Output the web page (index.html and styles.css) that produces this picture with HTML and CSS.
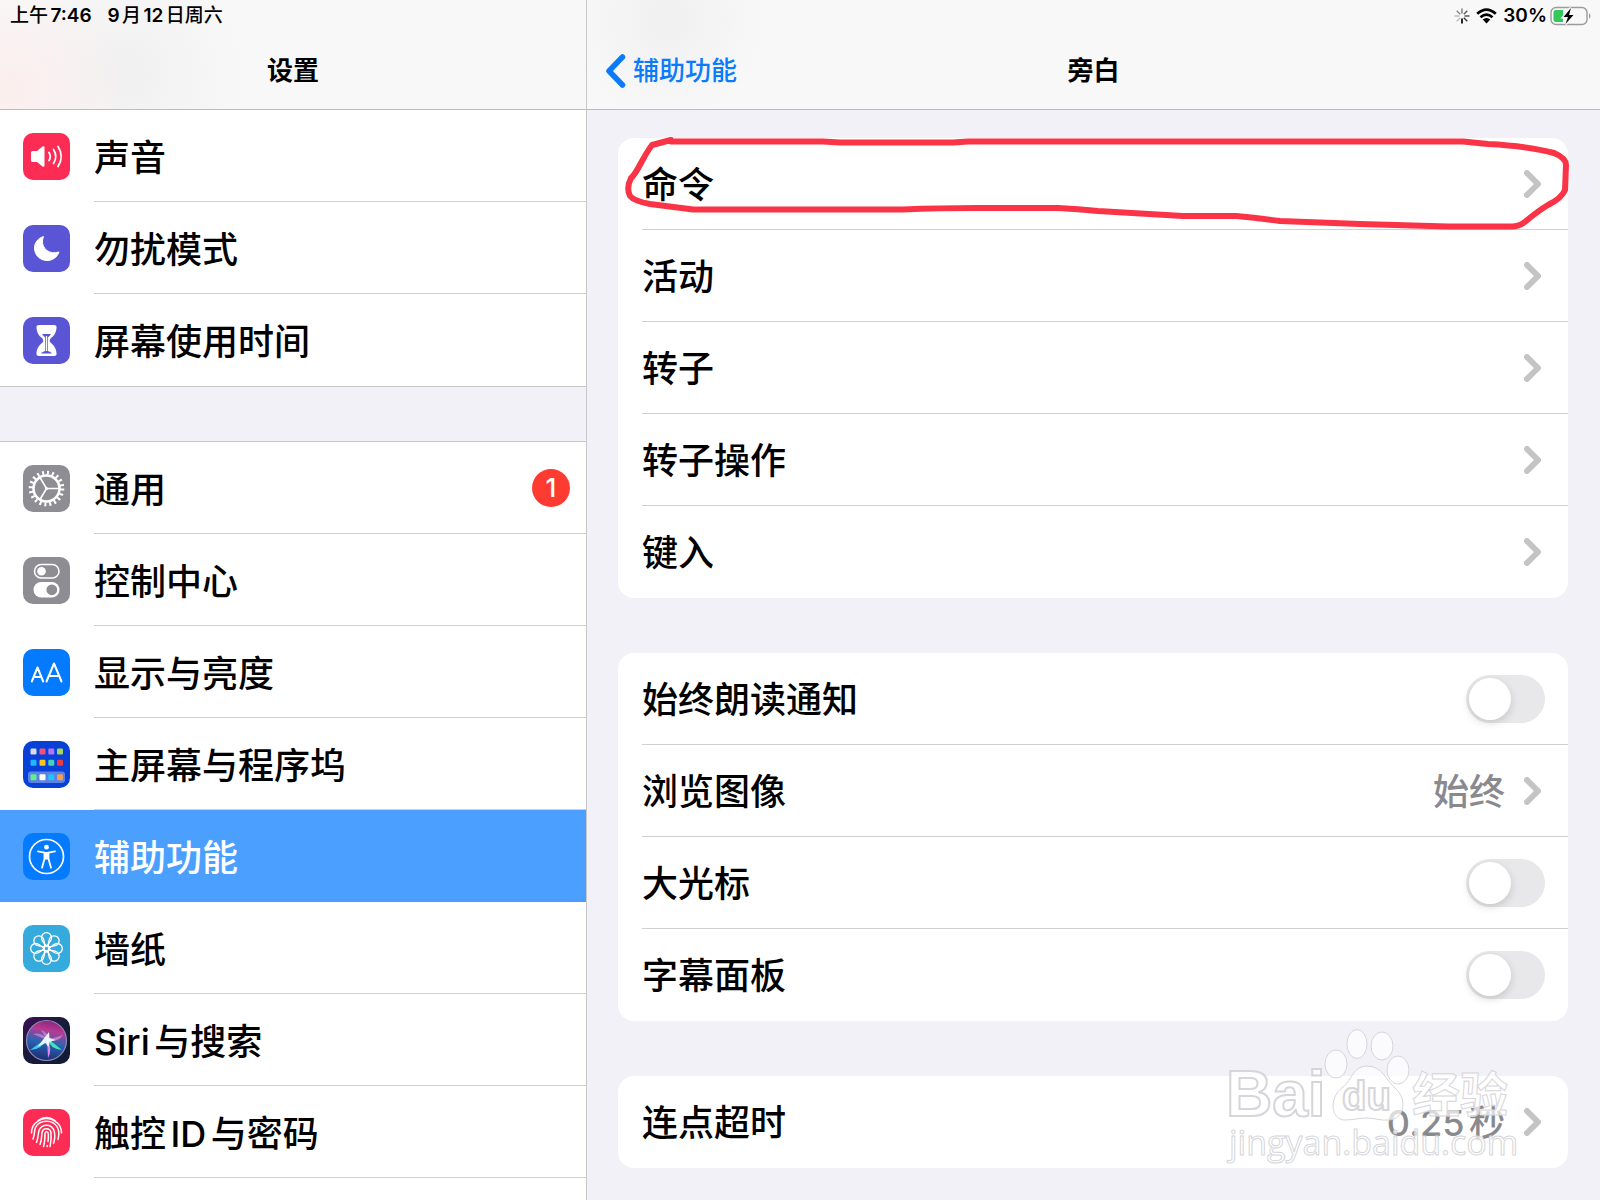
FILE: index.html
```html
<!DOCTYPE html>
<html lang="zh-CN">
<head>
    <meta charset="UTF-8">
    <meta name="viewport" content="width=device-width, initial-scale=1.0">
    <title>设置</title>
    <link rel="stylesheet" href="styles.css">
</head>
<body>
    <aside class="sidebar">
        <header class="bar bar-left">
            <div class="status">
                <span>上午<b>7:46</b></span>
                <span><b>9</b>月<b>12</b>日周六</span>
            </div>
            <div class="nav">
                <h2 class="title">设置</h2>
            </div>
        </header>

        <nav class="menu">
            <a class="item" href="#">
                <svg class="icon" viewBox="0 0 47 47">
                    <rect width="47" height="47" rx="10" fill="#fc2c55"/>
                    <path d="M8 19.500q0-1.500 1.500-1.500h4.500l5.500-4.500q2-1 2 1v18q0 2-2 1l-5.500-4.500h-4.500q-1.500 0-1.500-1.500z" fill="#fff"/>
                    <path d="M26 19.500q2.500 4 0 8M30.500 16.500q4.500 7 0 14M35 13.500q6.500 10 0 20" fill="none" stroke="#fff" stroke-width="1.800" stroke-linecap="round"/>
                </svg>
                <span class="label">声音</span>
            </a>
            <a class="item" href="#">
                <svg class="icon" viewBox="0 0 47 47">
                    <rect width="47" height="47" rx="10" fill="#5955d5"/>
                    <path d="M20.500 11.500c-6 2-9 6.500-9 11.500 0 7 5.500 12.500 12.500 12.500 5.500 0 10-3 12-8.500-9 3-17.500-3-16.500-12z" fill="#fff" stroke="#fff" stroke-width="1" stroke-linejoin="round"/>
                </svg>
                <span class="label">勿扰模式</span>
            </a>
            <a class="item" href="#">
                <svg class="icon" viewBox="0 0 47 47">
                    <rect width="47" height="47" rx="10" fill="#5955d5"/>
                    <path d="M16 8h15q3 0 2.500 3c-.5 6-3 8-6 10.500q-1.500 2 0 4c3 2.500 5.500 5 6 10.500q.5 3-2.500 3h-15q-3 0-2.500-3c.5-5.500 3-8 6-10.500q1.500-2 0-4c-3-2.500-5.500-4.500-6-10.500q-.5-3 2.500-3z" fill="#fff"/>
                    <path d="M19 17h9q-1.500 2-3.200 3.500v13.500q3.200.5 4.200 2.500h-11q1-2 4.200-2.500v-13.500q-1.700-1.500-3.200-3.500z" fill="#5955d5"/>
                    <path d="M23.500 19v15" stroke="#fff" stroke-width="1.200"/>
                </svg>
                <span class="label">屏幕使用时间</span>
            </a>
        </nav>

        <nav class="menu menu-last">
            <a class="item" href="#">
                <svg class="icon" viewBox="0 0 47 47">
                    <rect width="47" height="47" rx="10" fill="#8e8d93"/>
                    <circle cx="23.500" cy="23.500" r="15.800" fill="none" stroke="#fff" stroke-width="4" stroke-dasharray="2 2.964"/>
                    <circle cx="23.500" cy="23.500" r="13" fill="none" stroke="#fff" stroke-width="2.600"/>
                    <path d="M23.500 23.500h12M23.500 23.500l-6.500-11M23.500 23.500l-6.500 11" stroke="#fff" stroke-width="1.600"/>
                    <circle cx="23.500" cy="23.500" r="1.600" fill="#fff"/>
                </svg>
                <span class="label">通用</span>
                <span class="badge">1</span>
            </a>
            <a class="item" href="#">
                <svg class="icon" viewBox="0 0 47 47">
                    <rect width="47" height="47" rx="10" fill="#8e8d93"/>
                    <rect x="11.500" y="7.500" width="24.500" height="13.500" rx="6.700" fill="none" stroke="#fff" stroke-width="1.600"/>
                    <circle cx="18.500" cy="14.200" r="4.300" fill="#fff"/>
                    <rect x="10.500" y="25" width="26" height="15.500" rx="7.700" fill="#fff"/>
                    <circle cx="28.800" cy="32.800" r="5.400" fill="#8e8d93"/>
                </svg>
                <span class="label">控制中心</span>
            </a>
            <a class="item" href="#">
                <svg class="icon" viewBox="0 0 47 47">
                    <rect width="47" height="47" rx="10" fill="#047bfe"/>
                    <path d="M8.800 32.500l5.700-14 5.700 14M10.800 28h7.500M23.500 32.500l7.500-18 7.500 18M26 27h10" fill="none" stroke="#fff" stroke-width="2" stroke-linecap="round" stroke-linejoin="round"/>
                </svg>
                <span class="label">显示与亮度</span>
            </a>
            <a class="item" href="#">
                <svg class="icon" viewBox="0 0 47 47">
                    <rect width="47" height="47" rx="10" fill="#0940d8"/>
                    <rect x="5" y="30.500" width="37" height="11.500" rx="3" fill="#5b82e6"/>
                    <rect x="7.500" y="7.500" width="6" height="6" rx="1.200" fill="#d9dbe2"/>
                    <rect x="16.500" y="7.500" width="6" height="6" rx="1.200" fill="#f5507a"/>
                    <rect x="25.300" y="7.500" width="6" height="6" rx="1.200" fill="#b673f8"/>
                    <rect x="34" y="7.500" width="6" height="6" rx="1.200" fill="#a4d75b"/>
                    <rect x="7.500" y="18.700" width="6" height="6" rx="1.200" fill="#20b8fa"/>
                    <rect x="16.500" y="18.700" width="6" height="6" rx="1.200" fill="#fcc520"/>
                    <rect x="25.300" y="18.700" width="6" height="6" rx="1.200" fill="#45d6b0"/>
                    <rect x="34" y="18.700" width="6" height="6" rx="1.200" fill="#ee3b3c"/>
                    <rect x="7.500" y="33.200" width="6" height="6" rx="1.200" fill="#5ff088"/>
                    <rect x="16.500" y="33.200" width="6" height="6" rx="1.200" fill="#fff"/>
                    <rect x="25.300" y="33.200" width="6" height="6" rx="1.200" fill="#20c5fa"/>
                    <rect x="34" y="33.200" width="6" height="6" rx="1.200" fill="#f5a04e"/>
                </svg>
                <span class="label">主屏幕与程序坞</span>
            </a>
            <a class="item active" href="#">
                <svg class="icon" viewBox="0 0 47 47">
                    <rect width="47" height="47" rx="10" fill="#047bfe"/>
                    <circle cx="23.500" cy="23.500" r="17" fill="none" stroke="#fff" stroke-width="1.700"/>
                    <circle cx="23.500" cy="14.200" r="2.400" fill="#fff"/>
                    <path d="M15 18.300l6.500 1.400v6l-2.500 9M32 18.300l-6.500 1.400v6l2.500 9" fill="none" stroke="#fff" stroke-width="1.800" stroke-linecap="round" stroke-linejoin="round"/>
                    <path d="M21 19h5v7.500h-5z" fill="#fff"/>
                </svg>
                <span class="label">辅助功能</span>
            </a>
            <a class="item" href="#">
                <svg class="icon" viewBox="0 0 47 47">
                    <rect width="47" height="47" rx="10" fill="#35aadc"/>
                    <g fill="none" stroke="#fff" stroke-width="1.300">
                        <path id="petal" d="M23.500 21c-2-2.500-5-5-5-8.300a5 5 0 0 1 10 0c0 3.300-3 5.800-5 8.300z"/>
                        <use href="#petal" transform="rotate(45 23.500 23.500)"/>
                        <use href="#petal" transform="rotate(90 23.500 23.500)"/>
                        <use href="#petal" transform="rotate(135 23.500 23.500)"/>
                        <use href="#petal" transform="rotate(180 23.500 23.500)"/>
                        <use href="#petal" transform="rotate(225 23.500 23.500)"/>
                        <use href="#petal" transform="rotate(270 23.500 23.500)"/>
                        <use href="#petal" transform="rotate(315 23.500 23.500)"/>
                        <circle cx="23.500" cy="23.500" r="2.600"/>
                    </g>
                </svg>
                <span class="label">墙纸</span>
            </a>
            <a class="item" href="#">
                <svg class="icon" viewBox="0 0 47 47">
                    <defs>
                        <linearGradient id="siri-bg" x1="0" y1="0" x2="1" y2="1">
                            <stop offset="0" stop-color="#3c0f55"/>
                            <stop offset=".5" stop-color="#181b3c"/>
                            <stop offset="1" stop-color="#101c33"/>
                        </linearGradient>
                        <linearGradient id="siri-orb" x1=".6" y1="0" x2=".4" y2="1">
                            <stop offset="0" stop-color="#8b2380"/>
                            <stop offset=".25" stop-color="#b83a90"/>
                            <stop offset=".55" stop-color="#2a64b4"/>
                            <stop offset="1" stop-color="#1c2b72"/>
                        </linearGradient>
                    </defs>
                    <rect width="47" height="47" rx="10" fill="url(#siri-bg)"/>
                    <circle cx="23.500" cy="23.500" r="20" fill="url(#siri-orb)" stroke="#8c8bb0" stroke-width="1.200"/>
                    <path d="M24 23L10 17q10-2 14 6zM24 23l-6-10q8 2 6 10z" fill="#c9a0e4" opacity=".6"/>
                    <path d="M24 23l16-5q-5 8-16 5z" fill="#e58cd0" opacity=".7"/>
                    <path d="M24 21l-17 12q12 0 17-12z" fill="#37c8ee"/>
                    <path d="M24 21l15 12q-12-1-15-12z" fill="#43e5bd"/>
                    <path d="M24 21l1 20q5-8-1-20z" fill="#da87e8"/>
                    <path d="M26 15l.5 6 6 2-6 2-1 5-3-4-8 4 6-8z" fill="#fff" opacity=".9"/>
                </svg>
                <span class="label">Siri与搜索</span>
            </a>
            <a class="item" href="#">
                <svg class="icon" viewBox="0 0 47 47">
                    <rect width="47" height="47" rx="10" fill="#fc2c55"/>
                    <g fill="none" stroke="#fff" stroke-width="1.500" stroke-linecap="round">
                        <path d="M15 11.500q8.500-6 17 0"/>
                        <path d="M8.500 24c0-4 1.500-7.500 4-10q11-9 22 0c2.500 2.500 4 6 4 10"/>
                        <path d="M10 30c2-5 1-8 2.500-11.500 4-8.500 18-8.500 22 0 1.500 3 1.500 8 .5 12"/>
                        <path d="M13.500 33.500c2-5 1.500-8 2.500-12 2.500-7 12.500-7 15 0 1.200 4 .8 9-.5 13"/>
                        <path d="M17 35.500c2-5 1.500-8 2-12 1-5 8-5 9 0 .6 5 .2 9-1 14"/>
                        <path d="M20.500 37.500c1.500-5 1.500-8 1.500-13 .5-2.500 3-2.500 3.300 0 .2 3 0 6-.3 8"/>
                        <path d="M24.200 36.500v1"/>
                    </g>
                </svg>
                <span class="label">触控ID与密码</span>
            </a>
        </nav>
    </aside>

    <main class="detail">
        <header class="bar bar-right">
            <div class="status status-right">
                <svg class="spinner" viewBox="0 0 16 16" stroke="#111" stroke-width="1.300">
                    <path d="M8 10.500v5" stroke-width="1.800"/>
                    <path d="M9.800 9.800l3.500 3.500" opacity=".85"/>
                    <path d="M10.500 8h5" opacity=".8"/>
                    <path d="M9.800 6.200l3.500-3.500" opacity=".7"/>
                    <path d="M8 5.500v-5" opacity=".6"/>
                    <path d="M6.200 6.200l-3.500-3.500" opacity=".5"/>
                    <path d="M5.500 8h-5" opacity=".3"/>
                    <path d="M6.200 9.800l-3.500 3.500" opacity=".25"/>
                </svg>
                <svg class="wifi" viewBox="0 0 21 16">
                    <path d="M1.200 5.800q9.300-8.400 18.600 0M4.500 9.300q6-5.200 12 0" fill="none" stroke="#000" stroke-width="2.700"/>
                    <path d="M6.700 11.500q3.800-3 7.600 0l-3.800 4z"/>
                </svg>
                <b>30%</b>
                <svg class="battery" viewBox="0 0 42 20">
                    <rect x="1" y="1.500" width="36" height="17" rx="5" fill="none" stroke="#9b9b9d" stroke-width="1.400"/>
                    <path d="M39 7q3 3 0 6z" fill="#9b9b9d"/>
                    <path d="M6 4h7v12h-7q-2.500 0-2.500-2.500v-7q0-2.500 2.500-2.500z" fill="#34c759"/>
                    <path d="M21 2l-7.500 9h4.500l-2.500 7 8-9h-4.500z" stroke="#f8f8f8" stroke-width="3" paint-order="stroke"/>
                </svg>
            </div>
            <div class="nav">
                <a class="back" href="#">
                    <svg class="back-arrow" viewBox="0 0 21 34">
                        <path d="M17.500 3L4 17l13.500 14" fill="none" stroke="#0a7bfb" stroke-width="5.500" stroke-linecap="round" stroke-linejoin="round"/>
                    </svg>
                    <span>辅助功能</span>
                </a>
                <h1 class="title">旁白</h1>
            </div>
        </header>

        <div class="groups">
            <section class="card">
                <a class="row" href="#"><span class="label">命令</span><svg class="chevron" viewBox="0 0 17 28"><path d="M3 3l11 11L3 25"/></svg></a>
                <a class="row" href="#"><span class="label">活动</span><svg class="chevron" viewBox="0 0 17 28"><path d="M3 3l11 11L3 25"/></svg></a>
                <a class="row" href="#"><span class="label">转子</span><svg class="chevron" viewBox="0 0 17 28"><path d="M3 3l11 11L3 25"/></svg></a>
                <a class="row" href="#"><span class="label">转子操作</span><svg class="chevron" viewBox="0 0 17 28"><path d="M3 3l11 11L3 25"/></svg></a>
                <a class="row row-last" href="#"><span class="label">键入</span><svg class="chevron" viewBox="0 0 17 28"><path d="M3 3l11 11L3 25"/></svg></a>
                <!-- hand-drawn loop round the first row -->
                <svg class="scribble" viewBox="0 0 950 92" preserveAspectRatio="none">
                    <path d="M53 2L34 7Q30 12 23 25T13 40Q8 50 12 58Q16 63 32 66L75 71.500H285Q320 70 360 70H440Q460 71 480 73L565 78H618Q640 80 662 83L742 86L830 88.500H895Q902 88 908 83Q920 73 930 67Q944 60 947 52L948 27Q948 20 936 15Q910 8 870 6L845 3.500H350L335 4.500H222L205 3.500H53"/>
                </svg>
            </section>

            <section class="card">
                <div class="row">
                    <label class="label" for="speak">始终朗读通知</label>
                    <input class="switch" type="checkbox" id="speak">
                </div>
                <a class="row" href="#"><span class="label">浏览图像</span><span class="value">始终</span><svg class="chevron" viewBox="0 0 17 28"><path d="M3 3l11 11L3 25"/></svg></a>
                <div class="row">
                    <label class="label" for="cursor">大光标</label>
                    <input class="switch" type="checkbox" id="cursor">
                </div>
                <div class="row row-last">
                    <label class="label" for="caption">字幕面板</label>
                    <input class="switch" type="checkbox" id="caption">
                </div>
            </section>

            <section class="card">
                <a class="row row-last" href="#"><span class="label">连点超时</span><span class="value">0.25秒</span><svg class="chevron" viewBox="0 0 17 28"><path d="M3 3l11 11L3 25"/></svg></a>
            </section>
        </div>
    </main>

    <svg class="watermark" viewBox="0 0 300 145">
        <ellipse cx="116" cy="39" rx="11" ry="14"/>
        <ellipse cx="137" cy="19" rx="10" ry="14.500"/>
        <ellipse cx="162" cy="21" rx="11" ry="14"/>
        <ellipse cx="178" cy="45" rx="11" ry="14"/>
        <path d="M147 41c-14 0-15 14-24 21-15 11-12 33 2 33 9 0 13-2 22-2s13 3 22 2c16-1 18-21 7-31-10-9-14-23-29-23z"/>
        <text class="wm-bai" x="6" y="91">Bai</text>
        <text class="wm-du" x="122" y="85">du</text>
        <text class="wm-cn" x="192" y="87">经验</text>
        <text class="wm-url" x="9" y="130">jingyan.baidu.com</text>
    </svg>
</body>
</html>
```

FILE: styles.css
```css
* {
    box-sizing: border-box;
}
body {
    display: flex;
    position: relative;
    min-height: 100vh;
    margin: 0;
    background: #f2f1f7;
    color: #000;
    font-family: Inter, "Noto Sans CJK SC", sans-serif;
    font-size: 36px;
    font-weight: 500;
    line-height: 48px;
    text-autospace: normal;
}
a {
    color: inherit;
    text-decoration: none;
}
.sidebar {
    display: flex;
    flex-direction: column;
    flex: 0 0 587px;
    border-right: 1px solid #c8c7cc;
}
.detail {
    flex: 1;
}

/* top bars */
.bar {
    height: 110px;
    border-bottom: 1px solid #bcbbc0;
    background-color: #f8f8f8;
}
.bar-left {
    background-image:
        radial-gradient(circle at 10px 90px, #fbeeed 0, rgba(251, 238, 237, 0) 120px),
        radial-gradient(circle at 125px 75px, #f0f0f0 0, rgba(240, 240, 240, 0) 120px);
}
.bar-right {
    background-image: radial-gradient(circle at 80px 20px, #f0f0f0 0, rgba(240, 240, 240, 0) 100px);
}
.status {
    display: flex;
    align-items: center;
    gap: 16px;
    height: 32px;
    padding: 0 10px;
    font-size: 19px;
    line-height: 32px;
}
.status b {
    font-weight: 600;
}
.status-right {
    justify-content: flex-end;
    gap: 6px;
    padding-right: 8px;
}
.spinner {
    width: 16px;
    height: 16px;
}
.wifi {
    width: 21px;
    height: 16px;
}
.battery {
    width: 42px;
    height: 20px;
    margin-left: -3px;
}
.nav {
    display: grid;
    grid-template-columns: 1fr auto 1fr;
    align-items: center;
    height: 77px;
    font-size: 26px;
    line-height: 36px;
}
.title {
    grid-column: 2;
    margin: 0;
    font-size: 26px;
    font-weight: 700;
}
.back {
    display: flex;
    align-items: center;
    gap: 7px;
    padding-left: 18px;
    color: #0a7bfb;
}
.back-arrow {
    width: 21px;
    height: 34px;
}

/* left menu */
.menu {
    background: #fff;
    border-bottom: 1px solid #c8c7cc;
}
.menu-last {
    flex: 1;
    margin-top: 54px;
    border-top: 1px solid #c8c7cc;
    border-bottom: 0;
}
.item {
    display: flex;
    align-items: center;
    height: 92px;
    padding: 0 16px 0 23px;
    background: linear-gradient(#d0d0d2, #d0d0d2) 94px 100% / 100% 1px no-repeat;
}
.menu:not(.menu-last) .item:last-child {
    background: none;
}
.item.active {
    background: #4ba0ff;
    color: #fff;
}
.icon {
    width: 47px;
    height: 47px;
    margin-right: 24px;
}
.label {
    flex: 1;
    padding-top: 3px;
}
.badge {
    width: 38px;
    height: 38px;
    border-radius: 50%;
    background: #fe3b30;
    color: #fff;
    font-size: 26px;
    line-height: 38px;
    text-align: center;
}

/* right cards */
.groups {
    display: flex;
    flex-direction: column;
    gap: 55px;
    padding: 28px 32px 32px 31px;
}
.card {
    position: relative;
    border-radius: 16px;
    background: #fff;
}
.row {
    display: flex;
    align-items: center;
    height: 92px;
    margin-left: 24px;
    padding-right: 23px;
    border-bottom: 1px solid #d0d0d2;
}
.row-last {
    border-bottom-color: transparent;
}
.value {
    margin-right: 19px;
    padding-top: 3px;
    color: #8a8a8e;
}
.chevron {
    width: 17px;
    height: 28px;
    margin-right: 4px;
    fill: none;
    stroke: #c4c4c6;
    stroke-width: 6;
    stroke-linecap: round;
    stroke-linejoin: round;
}
.switch {
    display: flex;
    align-items: center;
    width: 79px;
    height: 48px;
    margin: 0;
    padding: 3px;
    appearance: none;
    border-radius: 24px;
    background: #e8e8ea;
}
.switch::before {
    content: "";
    width: 42px;
    height: 42px;
    border-radius: 50%;
    background: #fff;
    box-shadow: 0 3px 8px rgba(0, 0, 0, 0.15);
}
.switch:checked {
    justify-content: flex-end;
    background: #34c759;
}

/* overlays */
.scribble {
    position: absolute;
    top: 0;
    left: 0;
    width: 100%;
    height: 92px;
    overflow: visible;
    fill: none;
    stroke: #fa3446;
    stroke-width: 6;
    stroke-linecap: round;
    stroke-linejoin: round;
    pointer-events: none;
}
.watermark {
    position: absolute;
    right: 80px;
    bottom: 30px;
    width: 300px;
    height: 145px;
    fill: rgba(255, 255, 255, 0.7);
    stroke: #d6d6da;
    stroke-width: 1;
    pointer-events: none;
}
.wm-bai {
    font: bold 64px "Liberation Sans", sans-serif;
    stroke-width: 2;
}
.wm-du {
    font: bold 40px "Liberation Sans", sans-serif;
    stroke-width: 2;
}
.wm-cn {
    font: bold 48px "Noto Sans CJK SC", sans-serif;
}
.wm-url {
    font: 34px "Open Sans", sans-serif;
}
```
